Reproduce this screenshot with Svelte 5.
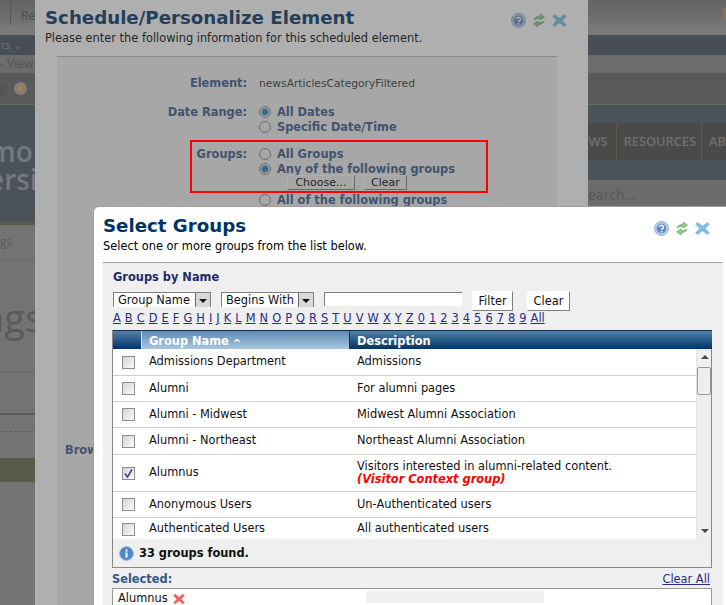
<script>
  const letters = 'A B C D E F G H I J K L M N O P Q R S T U V W X Y Z 0 1 2 3 4 5 6 7 8 9 All'.split(' ');

  const groups = [
    { name: 'Admissions Department', desc: 'Admissions', h: 27 },
    { name: 'Alumni', desc: 'For alumni pages', h: 26 },
    { name: 'Alumni - Midwest', desc: 'Midwest Alumni Association', h: 26 },
    { name: 'Alumni - Northeast', desc: 'Northeast Alumni Association', h: 27 },
    { name: 'Alumnus', desc: 'Visitors interested in alumni-related content.', note: '(Visitor Context group)', h: 37, checked: true },
    { name: 'Anonymous Users', desc: 'Un-Authenticated users', h: 26 },
    { name: 'Authenticated Users', desc: 'All authenticated users', h: 22 }
  ];
</script>

{#snippet tools()}
  <div class="tools">
    <svg width="15" height="15" viewBox="0 0 15 15">
      <circle cx="7.500" cy="7.500" r="6.900" fill="#c3d6ee" stroke="#86a8d6" />
      <circle cx="7.500" cy="7.500" r="4.900" fill="#5f8cc8" />
      <path d="M5.500 6a2 1.800 0 1 1 3.100 1.600c-.7.400-1.100.7-1.100 1.400" fill="none" stroke="#fff" stroke-width="1.400" />
      <rect x="6.800" y="10" width="1.500" height="1.500" fill="#fff" />
    </svg>
    <svg width="12" height="15" viewBox="0 0 12 15">
      <path d="M1 6.800C1.600 4.400 4 3.400 7 3.400V1L11.500 4 7 7V5.400C4.800 5.400 2.800 5.800 1 6.800z" fill="#8fd08f" stroke="#4f9f4f" stroke-width=".6" />
      <path d="M11 8.200C10.400 10.600 8 11.600 5 11.600V14L.5 11 5 8V9.600C7.200 9.600 9.200 9.200 11 8.200z" fill="#8fd08f" stroke="#4f9f4f" stroke-width=".6" />
    </svg>
    <svg width="15" height="15" viewBox="0 0 15 15">
      <path d="M2.500 1.500 7.500 5.200 12.500 1.500 14.300 3.300 10.200 7.500 14.300 11.700 12.500 13.500 7.500 9.800 2.500 13.500.7 11.700 4.800 7.500.7 3.300z" fill="#7dbde6" stroke="#5aa0d2" stroke-width=".5" />
    </svg>
  </div>
{/snippet}

<div class="desktop">
  <div class="page">
    <div class="strip left">
      <div class="band top"><span class="sep"></span><span class="re">Re</span></div>
      <div class="band gap"></div>
      <div class="band dark"><span class="ts">ts ⌄</span></div>
      <div class="band sub"><span class="view">- View</span></div>
      <div class="band tool"><span class="colon">y:</span><span class="orange"></span></div>
      <div class="hero"><div class="hero-line">mo</div><div class="hero-line">ersi</div></div>
      <div class="olive-line"></div>
      <div class="crumb">gs</div>
      <div class="bigword">ngs</div>
      <div class="solid"></div>
      <div class="dashed"></div>
      <div class="olive"></div>
    </div>
    <div class="strip right">
      <div class="band top"><span class="tab"></span></div>
      <div class="band gap"></div>
      <div class="band dark"></div>
      <div class="band sub"></div>
      <div class="band tool"></div>
      <div class="band slate"></div>
      <nav class="nav">
        <span class="nav-item news">WS</span>
        <span class="nav-item res">RESOURCES</span>
        <span class="nav-item ab">AB</span>
      </nav>
      <div class="band slate2"></div>
      <div class="search">earch...</div>
    </div>
  </div>

  <section class="dialog back">
    <header class="head">
      <div>
        <h1>Schedule/Personalize Element</h1>
        <p>Please enter the following information for this scheduled element.</p>
      </div>
      {@render tools()}
    </header>
    <div class="panel">
      <div class="form">
        <div class="lab el">Element:</div>
        <div class="val el">newsArticlesCategoryFiltered</div>
        <div class="lab dr">Date Range:</div>
        <div class="val dr">
          <div class="radio-row"><i class="radio on"></i>All Dates</div>
          <div class="radio-row"><i class="radio"></i>Specific Date/Time</div>
        </div>
        <div class="lab gr">Groups:</div>
        <div class="val gr">
          <div class="radio-row"><i class="radio"></i>All Groups</div>
          <div class="radio-row"><i class="radio on"></i>Any of the following groups</div>
          <div class="btns"><button>Choose...</button><button>Clear</button></div>
          <div class="radio-row"><i class="radio"></i>All of the following groups</div>
        </div>
      </div>
      <div class="brow">Browse</div>
    </div>
    <div class="dim"></div>
  </section>

  <div class="callout"></div>

  <section class="dialog front">
    <header class="head">
      <div>
        <h1>Select Groups</h1>
        <p>Select one or more groups from the list below.</p>
      </div>
      {@render tools()}
    </header>
    <div class="panel">
      <h2>Groups by Name</h2>
      <div class="filters">
        <div class="select name">Group Name<b class="drop"></b></div>
        <div class="select op">Begins With<b class="drop"></b></div>
        <input class="text" type="text" />
        <button class="plain filter">Filter</button>
        <button class="plain clear">Clear</button>
      </div>
      <div class="alpha">
        {#each letters as l}<a href="#{l}">{l}</a>{/each}
      </div>
      <div class="grid">
        <div class="grid-head">
          <div class="hc check"></div>
          <div class="hc name">Group Name <span class="caret">^</span></div>
          <div class="hc desc">Description</div>
        </div>
        <div class="grid-body">
          <div class="rows">
            {#each groups as g}
              <div class="row" style="height: {g.h}px">
                <div class="cell check"><i class="box" class:checked={g.checked}>{#if g.checked}<svg width="11" height="11" viewBox="0 0 11 11"><path d="M2 5.500 4.500 9 9 1.500" fill="none" stroke="#3a4f9c" stroke-width="1.700" /></svg>{/if}</i></div>
                <div class="cell name">{g.name}</div>
                <div class="cell desc">
                  <div>{g.desc}</div>
                  {#if g.note}<div class="note">{g.note}</div>{/if}
                </div>
              </div>
            {/each}
          </div>
          <div class="scroll">
            <span class="arrow up"></span>
            <span class="thumb"></span>
            <span class="arrow down"></span>
          </div>
        </div>
        <div class="found">
          <svg width="15" height="15" viewBox="0 0 15 15">
            <circle cx="7.500" cy="7.500" r="6.800" fill="#4f86c6" stroke="#86aede" />
            <rect x="6.500" y="6.500" width="2" height="5" fill="#fff" />
            <rect x="6.500" y="3.500" width="2" height="2" fill="#fff" />
          </svg>
          <span>33 groups found.</span>
        </div>
      </div>
      <div class="sel-head"><span class="sel-label">Selected:</span><a href="#all">Clear All</a></div>
      <div class="sel-box">
        <span>Alumnus</span>
        <svg width="12" height="12" viewBox="0 0 12 12"><path d="M2 1 6 4.200 10 1 11.500 2.500 8 6 11.500 9.500 10 11 6 7.800 2 11 .5 9.500 4 6 .5 2.500z" fill="#f0616a" stroke="#d9534f" stroke-width=".4" /></svg>
        <span class="patch"></span>
      </div>
    </div>
  </section>
</div>

<style>
  :global(body) {
    margin: 0;
    background: #737373;
  }

  .desktop {
    position: relative;
    width: 726px;
    height: 605px;
    overflow: hidden;
    font-family: "DejaVu Sans", Verdana, sans-serif;
    font-size: 11.400px;
    color: #000;
  }

  /* dimmed site behind the dialogs */
  .page {
    display: flex;
    justify-content: space-between;
    height: 605px;
    font-family: "Open Sans", sans-serif;
    color: #6d6d6d;
  }
  .strip {
    position: relative;
    overflow: hidden;
  }
  .strip.left {
    width: 36px;
  }
  .strip.right {
    width: 138px;
  }
  .band {
    position: relative;
    overflow: hidden;
    white-space: nowrap;
  }
  .top {
    height: 25px;
    background: linear-gradient(#636363, #747474);
  }
  .gap {
    height: 10px;
    background: #797979;
  }
  .dark {
    height: 20px;
    background: #474e56;
    color: #6f757b;
  }
  .sub {
    height: 18px;
    background: #6c6c6c;
    color: #4f5458;
    font-size: 12px;
    line-height: 18px;
  }
  .tool {
    height: 31px;
    background: #59595b;
    border-bottom: 1px solid #6d6a60;
    display: flex;
    align-items: center;
  }
  .sep {
    position: absolute;
    left: 10px;
    top: 0;
    bottom: 0;
    border-left: 1px solid #565656;
  }
  .re {
    position: absolute;
    left: 21px;
    top: 7px;
    font-size: 12px;
    color: #4c4c4c;
  }
  .tab {
    position: absolute;
    right: 0;
    top: 8px;
    width: 3px;
    height: 12px;
    background: #8a7355;
  }
  .ts {
    margin-left: 1px;
    font-size: 11px;
    line-height: 20px;
  }
  .colon {
    margin-left: -1px;
    margin-right: 6px;
    font-size: 12px;
    color: #4e4e4e;
  }
  .orange {
    position: relative;
    width: 13px;
    height: 13px;
    border-radius: 50%;
    background: #85817a;
  }
  .orange::after {
    content: "";
    position: absolute;
    left: 3px;
    top: 5px;
    border: 3.500px solid transparent;
    border-top: 4px solid #b9812f;
    border-bottom: 0;
  }
  .hero {
    height: 117px;
    background: #4a525a;
    font-size: 28px;
    font-weight: 600;
    line-height: 28px;
    color: #74797e;
    padding-top: 32px;
    box-sizing: border-box;
    white-space: nowrap;
  }
  .hero-line:first-child {
    margin-left: -11px;
  }
  .hero-line:last-child {
    margin-left: -12px;
  }
  .olive-line {
    height: 3px;
    background: #565c47;
  }
  .crumb {
    height: 35px;
    line-height: 34px;
    font-size: 12px;
    color: #5c5c5c;
    border-bottom: 1px solid #5f6d78;
  }
  .bigword {
    height: 111px;
    margin-left: -19px;
    font-size: 38px;
    line-height: 112px;
    color: #5a5a5a;
    border-bottom: 1px dotted #5e5e5e;
    white-space: nowrap;
  }
  .solid {
    height: 2px;
    margin-top: 40px;
    background: #5a5a5a;
  }
  .dashed {
    height: 0;
    margin-top: 16px;
    border-bottom: 1px dashed #5e5e5e;
  }
  .olive {
    height: 24px;
    margin-top: 26px;
    background: #575c48;
  }
  .slate {
    height: 18px;
    background: #4a525a;
  }
  .nav {
    display: flex;
    height: 37px;
    background: #4a4a4a;
    align-items: stretch;
    font-weight: 600;
    font-size: 12.800px;
    line-height: 37px;
    color: #707070;
    white-space: nowrap;
  }
  .nav-item {
    display: block;
    border-right: 1px solid #5b5c48;
    box-sizing: border-box;
  }
  .nav-item.news {
    width: 29px;
    text-align: right;
    padding-right: 8px;
  }
  .nav-item.res {
    width: 87px;
    padding-left: 7px;
  }
  .nav-item.ab {
    padding-left: 7px;
    border-right: 0;
  }
  .slate2 {
    height: 20px;
    background: #4a525a;
  }
  .search {
    height: 26px;
    line-height: 30px;
    background: #6b6b6b;
    font-size: 14px;
    color: #565656;
  }

  /* dialogs */
  .dialog {
    position: absolute;
    box-sizing: border-box;
  }
  .head {
    display: flex;
    justify-content: space-between;
    align-items: flex-start;
  }
  h1 {
    margin: 0;
    font-size: 18.200px;
    font-weight: 700;
    line-height: 24px;
    color: #003366;
  }
  .head p {
    margin: 1px 0 0;
    line-height: 14px;
  }
  .tools {
    display: flex;
    align-items: center;
    gap: 7px;
    margin-top: 7px;
  }

  .back {
    left: 35px;
    top: 0;
    width: 553px;
    height: 605px;
    background: #fff;
    padding: 6px 0 0 10px;
  }
  .back .head {
    padding-right: 21px;
  }
  .back .panel {
    position: relative;
    margin: 11px 0 0 12px;
    width: 500px;
    height: 560px;
    background: #f0f0f0;
    border-top: 1px solid #b8b8b8;
    box-sizing: border-box;
  }
  .dim {
    position: absolute;
    inset: 0;
    background: rgba(78, 78, 78, 0.45);
  }
  .form {
    display: grid;
    grid-template-columns: 190px 1fr;
    column-gap: 12px;
    padding-top: 19px;
  }
  .lab {
    font-weight: 700;
    color: #35598a;
    text-align: right;
    line-height: 15px;
  }
  .val.el {
    line-height: 15px;
    height: 20px;
    box-sizing: border-box;
    color: #333;
    font-size: 10.700px;
  }
  .val.el,
  .lab.el {
    margin-bottom: 8px;
  }
  .val.dr {
    margin-bottom: 12px;
  }
  .lab.dr,
  .lab.gr {
    padding-top: 1px;
  }
  .radio-row {
    display: flex;
    align-items: center;
    height: 15px;
    font-weight: 700;
    color: #35598a;
    white-space: nowrap;
  }
  .radio {
    width: 10px;
    height: 10px;
    margin-right: 6px;
    border-radius: 50%;
    border: 1px solid #888;
    background: #eee;
  }
  .radio.on {
    background: radial-gradient(circle, #2b86b8 0 3px, #e8e8e8 4px);
  }
  .btns {
    display: flex;
    gap: 9px;
    margin: -1px 0 2px 28px;
  }
  button {
    font: inherit;
    color: #000;
    margin: 0;
    padding: 0;
    background: #fff;
    border: 1px solid;
    border-color: #fff #808080 #808080 #fff;
    border-radius: 0;
  }
  .btns button {
    height: 15px;
    line-height: 11px;
    font-size: 11px;
    background: #f0f0f0;
  }
  .btns button:first-child {
    width: 68px;
  }
  .btns button:last-child {
    width: 43px;
  }
  .brow {
    position: absolute;
    left: 8px;
    top: 386px;
    font-weight: 700;
    color: #35598a;
  }

  .callout {
    position: absolute;
    left: 190px;
    top: 140px;
    width: 298px;
    height: 53px;
    box-sizing: border-box;
    border: 2px solid #f00;
  }

  .front {
    left: 93px;
    top: 206px;
    width: 640px;
    height: 400px;
    background: #fff;
    border: 1px solid #a39c9c;
    border-radius: 6px 0 0 0;
    padding: 7px 0 0 9px;
  }
  .front .head {
    padding-right: 22px;
  }
  .front .panel {
    margin-top: 9px;
    width: 620px;
    height: 345px;
    background: #efefef;
    border-top: 1px solid #a8a8a8;
    box-sizing: border-box;
    padding: 7px 0 0 10px;
  }
  h2 {
    margin: 0;
    height: 15px;
    font-size: 11.400px;
    font-weight: 700;
    line-height: 15px;
    color: #1f2a6b;
  }
  .filters {
    display: flex;
    align-items: flex-start;
    margin-top: 7px;
    height: 21px;
  }
  .select {
    display: flex;
    justify-content: space-between;
    box-sizing: border-box;
    height: 15px;
    background: #fff;
    border-top: 1px solid #808080;
    border-left: 1px solid #808080;
    border-right: 1px solid #808080;
    padding-left: 4px;
    line-height: 14px;
    color: #111;
  }
  .select.name {
    width: 98px;
    margin-right: 10px;
  }
  .select.op {
    width: 93px;
    margin-right: 10px;
  }
  .drop {
    position: relative;
    width: 15px;
    height: 14px;
    background: #d8d8d8;
    border-left: 1px solid #666;
    box-sizing: border-box;
  }
  .drop::after {
    content: "";
    position: absolute;
    left: 3px;
    top: 6px;
    border: 4px solid transparent;
    border-top: 4px solid #111;
    border-bottom: 0;
  }
  .text {
    width: 138px;
    height: 14px;
    box-sizing: border-box;
    margin: 0 10px 0 0;
    padding: 0;
    background: #fff;
    border: 0;
    border-top: 1px solid #808080;
    border-left: 1px solid #808080;
  }
  .plain {
    height: 20px;
    margin-top: -1px;
    line-height: 18px;
    color: #111;
  }
  .filter {
    width: 41px;
    margin-right: 14px;
  }
  .clear {
    width: 43px;
  }
  .alpha {
    display: flex;
    gap: 4.050px;
    height: 20px;
    margin-top: -3px;
    line-height: 16px;
    white-space: nowrap;
  }
  a {
    color: #2a2a8a;
    text-decoration: underline;
  }
  .grid {
    width: 600px;
    box-sizing: border-box;
    margin-left: -1px;
    border-bottom: 1px solid #888;
    border-left: 1px solid #888;
    border-right: 1px solid #888;
  }
  .grid-head {
    display: flex;
    height: 18px;
    margin-right: -1px;
    border-top: 1px solid #0f2f55;
    box-sizing: content-box;
    line-height: 20px;
    font-weight: 700;
    color: #fff;
    background: linear-gradient(#5180a8, #003366);
  }
  .hc {
    box-sizing: border-box;
  }
  .hc.check {
    width: 29px;
    border-right: 1px solid #cfe0ee;
  }
  .hc.name {
    width: 208px;
    padding-left: 7px;
    background: linear-gradient(#5f8ab4, #a9c5e0);
    border-right: 1px solid #003366;
  }
  .hc.desc {
    flex: 1;
    padding-left: 7px;
  }
  .caret {
    font-size: 10px;
    vertical-align: -2px;
  }
  .grid-body {
    display: flex;
    height: 190px;
    overflow: hidden;
    background: #fff;
  }
  .rows {
    width: 583px;
    flex: none;
  }
  .row {
    display: flex;
    box-sizing: border-box;
    padding-bottom: 1px;
    border-bottom: 1px solid #cfcfcf;
    align-items: center;
  }
  .row:last-child {
    border-bottom: 0;
  }
  .cell {
    box-sizing: border-box;
    line-height: 13px;
    color: #111;
  }
  .cell.check {
    width: 29px;
    padding-left: 9px;
  }
  .cell.name {
    width: 208px;
    padding-left: 7px;
  }
  .cell.desc {
    flex: 1;
    padding-left: 7px;
  }
  .note {
    color: #f00;
    font-weight: 700;
    font-style: italic;
  }
  .box {
    display: block;
    position: relative;
    width: 13px;
    height: 13px;
    margin-top: 1px;
    box-sizing: border-box;
    border: 1px solid #8e8e8e;
    background: linear-gradient(135deg, #d4d4d4, #fbfbfb);
  }
  .box svg {
    display: block;
  }
  .scroll {
    position: relative;
    flex: 1;
    background: #efefef;
    border-left: 1px solid #e4e4e4;
  }
  .arrow {
    position: absolute;
    left: 4px;
    border: 4px solid transparent;
  }
  .arrow.up {
    top: 6px;
    border-bottom: 4px solid #444;
    border-top: 0;
  }
  .arrow.down {
    bottom: 6px;
    border-top: 4px solid #444;
    border-bottom: 0;
  }
  .thumb {
    position: absolute;
    left: 0;
    top: 18px;
    width: 14px;
    height: 28px;
    box-sizing: border-box;
    border: 1px solid #999;
    border-radius: 2px;
    background: #eee;
  }
  .found {
    display: flex;
    align-items: center;
    gap: 5px;
    height: 28px;
    padding-left: 6px;
    box-sizing: border-box;
    background: #efefef;
    font-weight: 700;
    color: #111;
  }
  .sel-head {
    display: flex;
    justify-content: space-between;
    width: 598px;
    margin-left: -1px;
    height: 20px;
    padding-top: 4px;
    box-sizing: border-box;
    line-height: 14px;
  }
  .sel-label {
    font-weight: 700;
    color: #35598a;
  }
  .sel-box {
    position: relative;
    display: flex;
    gap: 5px;
    width: 600px;
    margin-left: -1px;
    height: 40px;
    box-sizing: border-box;
    align-items: flex-start;
    padding: 2px 0 0 5px;
    background: #fff;
    border: 1px solid #999;
    color: #111;
    line-height: 14px;
  }
  .sel-box svg {
    margin-top: 2px;
  }
  .patch {
    position: absolute;
    left: 253px;
    top: 2px;
    width: 178px;
    height: 12px;
    background: #f0f0f0;
  }
</style>
